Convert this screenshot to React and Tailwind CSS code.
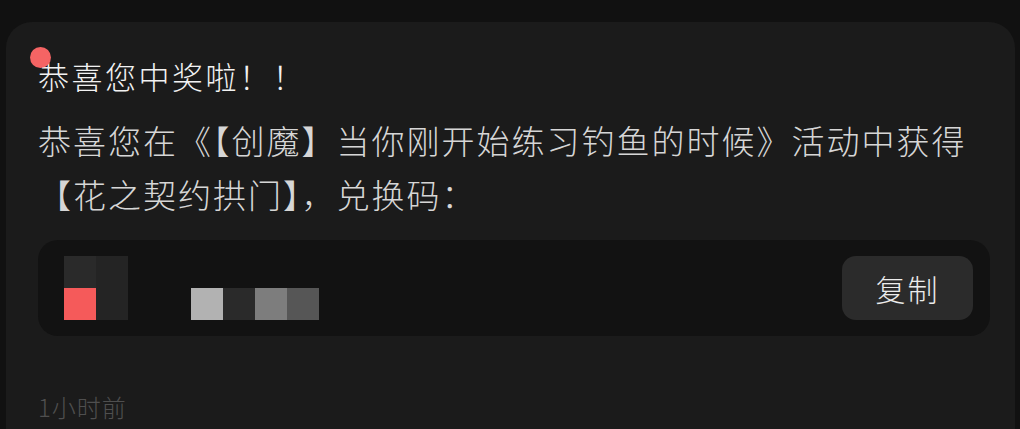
export default function App() {
  const font = { fontFamily: '"Noto Sans CJK SC", "Noto Sans", sans-serif' }

  return (
    <div className="min-h-screen bg-[#111111] pl-[6px] pr-[5px] pt-[22px]" style={font}>
      <div className="relative min-h-[420px] rounded-t-[26px] bg-[#1b1b1b] pl-[32px] pr-[20px] pt-[32px]">
        <span className="absolute left-[24px] top-[25px] h-[21px] w-[21px] rounded-full bg-[#f56464]" />

        <h1 className="text-[31px] leading-[44px] font-light tracking-[2.5px] text-[#f2f2f2]">
          恭喜您中奖啦！！
        </h1>

        <p className="mt-[15px] text-[33px] leading-[54px] font-light tracking-[2px] text-[#d6d6d6]">
          恭喜您在《【创魔】当你刚开始练习钓鱼的时候》活动中获得
          <br />
          【花之契约拱门】，兑换码：
        </p>

        <div className="mt-[19px] mr-[5px] flex h-[96px] items-center justify-between rounded-[20px] bg-[#121212] pl-[26px] pr-[17px]">
          <div className="flex flex-col">
            <div className="flex">
              <div className="h-[32px] w-[32px] bg-[#2a2a2a]" />
              <div className="h-[32px] w-[32px] bg-[#242424]" />
            </div>
            <div className="flex">
              <div className="h-[32px] w-[32px] bg-[#f55a5a]" />
              <div className="h-[32px] w-[32px] bg-[#242424]" />
              <div className="ml-[63px] h-[32px] w-[32px] bg-[#b2b2b2]" />
              <div className="h-[32px] w-[32px] bg-[#2a2a2a]" />
              <div className="h-[32px] w-[32px] bg-[#7d7d7d]" />
              <div className="h-[32px] w-[32px] bg-[#565656]" />
            </div>
          </div>

          <button className="flex h-[64px] w-[131px] items-center justify-center rounded-[14px] bg-[#2b2b2b] text-[30px] font-light tracking-[2px] text-[#ececec]">
            复制
          </button>
        </div>

        <p className="mt-[55px] text-[24px] leading-[32px] font-light tracking-[1px] text-[#4f4f4f]">1小时前</p>
      </div>
    </div>
  )
}
